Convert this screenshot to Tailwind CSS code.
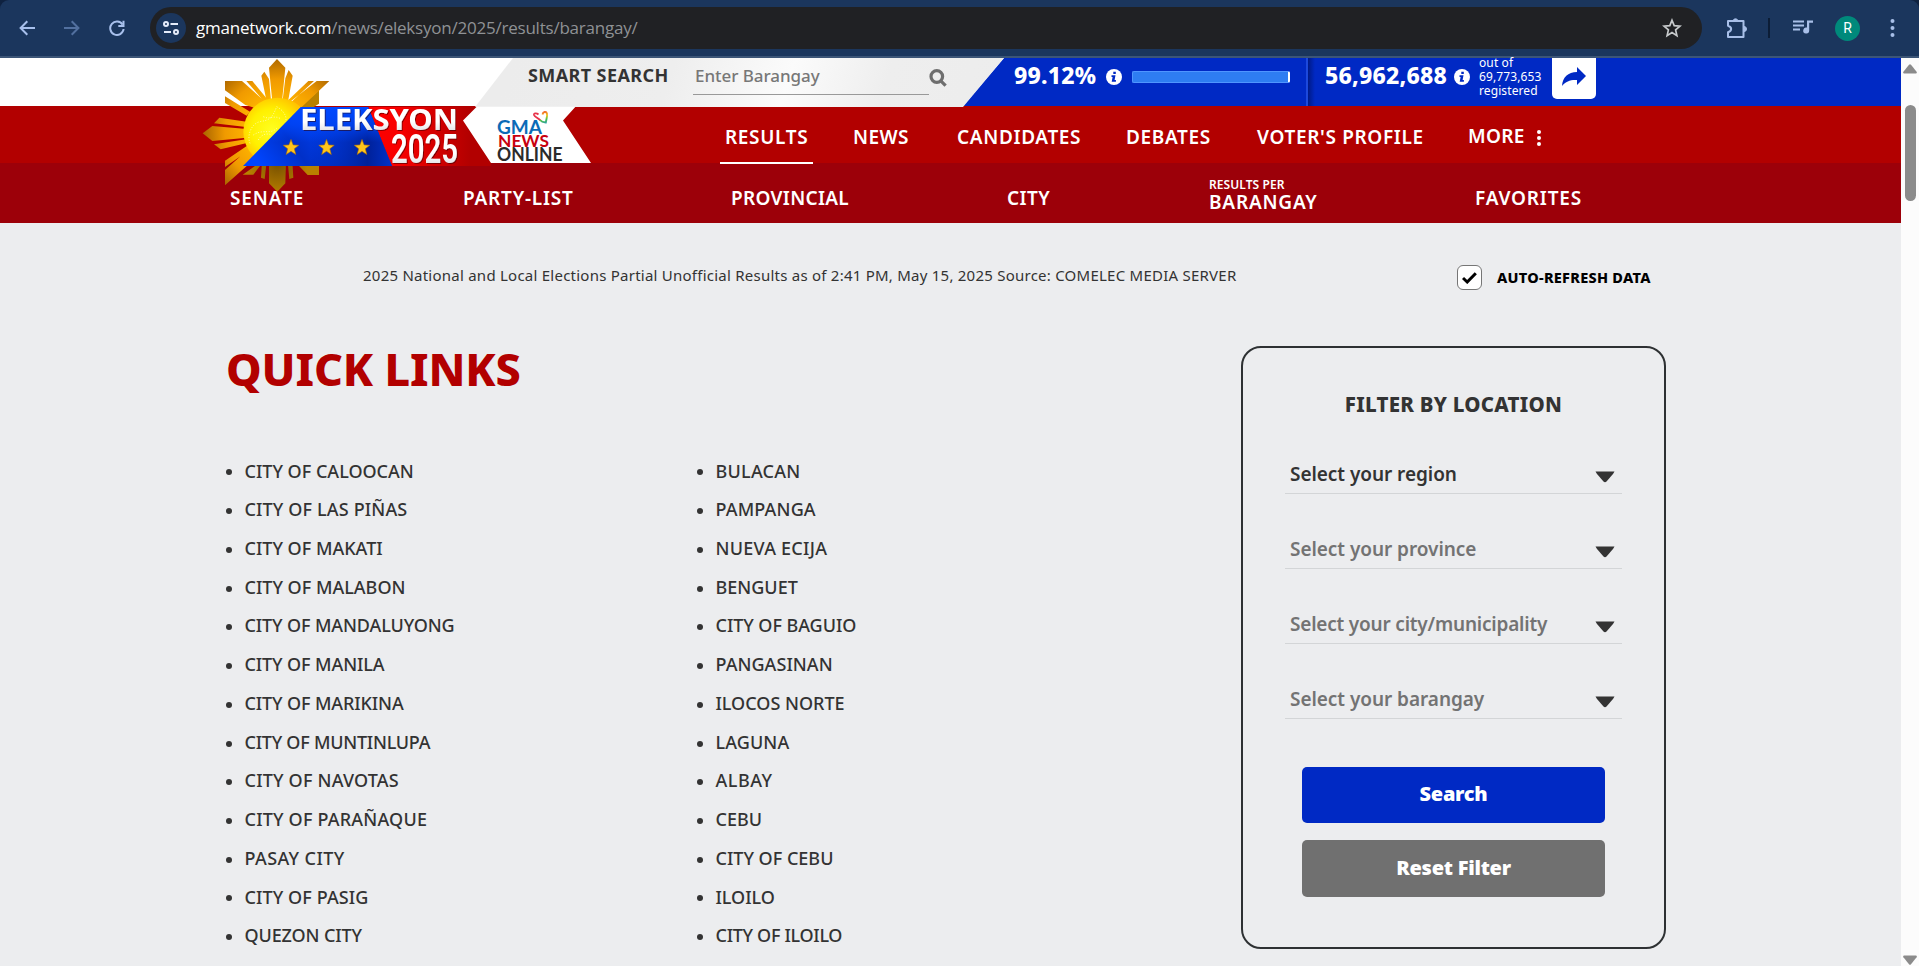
<!DOCTYPE html>
<html lang="en">
<head>
<meta charset="utf-8">
<title>Eleksyon 2025 - Barangay Results</title>
<script src="https://cdn.jsdelivr.net/npm/@tailwindcss/browser@4"></script>
</head>
<body class="flex h-[966px] w-[1919px] flex-col overflow-hidden bg-[#ecedef] font-['Noto_Sans',sans-serif] text-[#333]">

<!-- Browser toolbar -->
<header class="bg-[#0f2240]">
  <div class="flex h-[58px] items-start rounded-t-[9px] border-b-2 border-[#3c5577] bg-[#1b365d]">
    <div class="flex h-[56px] w-[150px] shrink-0 items-center gap-[29px] pl-[19px]">
      <svg class="h-[16px] w-[16px]" viewBox="0 0 16 16" fill="none" stroke="#a8c0ec" stroke-width="2"><path d="M16 8H2M8.3 1.3L1.6 8l6.7 6.7"/></svg>
      <svg class="h-[16px] w-[16px]" viewBox="0 0 16 16" fill="none" stroke="#52709f" stroke-width="2"><path d="M0 8h14M7.7 1.3L14.4 8l-6.7 6.7"/></svg>
      <svg class="h-[16px] w-[16px]" viewBox="0 0 16 16" fill="none" stroke="#a8c0ec" stroke-width="2"><path d="M13.6 4.6A6.7 6.7 0 1 0 14.6 9"/><path d="M14.5 .8V6H9.3"/></svg>
    </div>
    <div class="mt-[7px] flex h-[42px] w-[1552px] shrink-0 items-center rounded-full bg-[#202124]">
      <div class="ml-[6px] flex h-[30px] w-[30px] items-center justify-center rounded-full bg-[#1b365d]">
        <svg class="h-[16px] w-[16px]" viewBox="0 0 16 16" fill="none" stroke="#e4ebfa" stroke-width="2"><circle cx="3" cy="4" r="2"/><path d="M7.5 4H15M1 12h7"/><circle cx="13" cy="12" r="2"/></svg>
      </div>
      <div class="ml-[10px] whitespace-nowrap font-['Open_Sans',sans-serif] text-[17px] tracking-[-0.22px] text-[#8f9295]"><span class="text-white">gmanetwork.com</span>/news/eleksyon/2025/results/barangay/</div>
      <svg class="ml-auto mr-[20px] h-[20px] w-[20px]" viewBox="0 0 20 20" fill="none" stroke="#c7cacc" stroke-width="1.7"><path d="M10 2.2l2.2 5.4 5.8.5-4.4 3.8 1.3 5.7-4.9-3-4.9 3 1.3-5.7L2 8.100l5.800-.5z"/></svg>
    </div>
    <div class="flex h-[56px] items-center pl-[23px]">
      <svg class="h-[23px] w-[23px]" viewBox="0 0 23 23" fill="none" stroke="#a8bfe8" stroke-width="2"><path d="M3 4h15.500v16H3v-4.800c4.200-1.500 4.200-5 0-6.400z" stroke-linejoin="round"/><path d="M8 3.500a2.700 2.700 0 0 1 5 0zM19 9.500a2.500 2.500 0 0 1 0 5z" fill="#a8bfe8" stroke-width="1"/></svg>
      <div class="ml-[20px] h-[20px] w-[2px] bg-[#0c1d36]"></div>
      <svg class="ml-[23px] mb-[2px] h-[16px] w-[21px]" viewBox="0 0 21 16" fill="#a8bfe8"><path d="M0 1.500h11v2H0zM0 5.500h11v2H0zM0 9.500h7v2H0zM14 1.500h6v2.200h-3.800v7.800a3 3 0 1 1-2.200-2.900z"/></svg>
      <div class="ml-[21px] flex h-[25px] w-[25px] items-center justify-center rounded-full bg-[#00897b] font-['Roboto',sans-serif] text-[14px] text-white">R</div>
      <svg class="ml-[30px] h-[18px] w-[5px]" viewBox="0 0 5 18" fill="#a8bfe8"><circle cx="2.500" cy="2" r="2"/><circle cx="2.500" cy="9" r="2"/><circle cx="2.500" cy="16" r="2"/></svg>
    </div>
  </div>
</header>

<div class="flex h-[908px]">
<div class="relative w-[1901px]">

  <!-- Search and vote count -->
  <section class="relative flex h-[48px] bg-white">
    <svg class="absolute left-[475px] top-0 h-[49px] w-[1426px]" viewBox="0 0 1426 49">
      <defs>
        <linearGradient id="gg" x1="38" y1="0" x2="530" y2="160" gradientUnits="userSpaceOnUse"><stop offset="0" stop-color="#ececec"/><stop offset=".3" stop-color="#eeeeee"/><stop offset=".52" stop-color="#fbfbfb"/><stop offset=".7" stop-color="#eeeeee"/><stop offset="1" stop-color="#ececec"/></linearGradient>
        <linearGradient id="sh"><stop offset="0" stop-color="#001a86"/><stop offset="1" stop-color="#0029c4"/></linearGradient>
      </defs>
      <path d="M529 0H1426V48H488z" fill="#0029c4"/>
      <path d="M38 0H529L488 49H0z" fill="url(#gg)"/>
      <path d="M831 0h2v48h-2z" fill="#1d49dc"/><path d="M833 0h7v48h-7z" fill="url(#sh)"/>
    </svg>
    <div class="relative flex h-[36px] w-full items-center whitespace-nowrap">
      <div class="-mt-[2px] ml-[528px] w-[165px] text-[18px] font-bold tracking-[0.4px]">SMART SEARCH</div>
      <div class="mt-[5px] flex h-[33px] w-[236px] items-start border-b border-[#999] pl-[2px] pt-px text-[17px] font-medium leading-[25px] tracking-[-0.05px] text-[#777]">Enter Barangay</div>
      <svg class="mt-[3px] h-[18px] w-[18px]" viewBox="0 0 18 18" fill="none" stroke="#6e6e6e" stroke-width="3.200"><circle cx="7.800" cy="7.500" r="5.800"/><path d="M11.800 11.800l4.800 4.800"/></svg>
      <div class="-mt-[2px] ml-[67px] w-[92px] text-[23px] font-extrabold tracking-[0.2px] text-white">99.12%</div>
      <svg class="mt-px h-[16px] w-[16px]" viewBox="0 0 16 16"><circle cx="8" cy="8" r="8" fill="#fff"/><path d="M7.300 2.700h2.500v2.200H7.300zM5.500 6.300h4L8.600 11h1.300v1.700H5.700L6.600 8H5.500z" fill="#0029c4"/></svg>
      <div class="ml-[10px] mt-[2px] h-[12px] w-[158px] rounded-[2px] border border-r-2 border-[#4f95ff] border-r-white bg-[#2e7df2]"></div>
      <div class="-mt-[2px] ml-[35px] w-[129px] text-[23px] font-extrabold tracking-[0.2px] text-white">56,962,688</div>
      <svg class="mt-px h-[16px] w-[16px]" viewBox="0 0 16 16"><circle cx="8" cy="8" r="8" fill="#fff"/><path d="M7.300 2.700h2.500v2.200H7.300zM5.500 6.300h4L8.600 11h1.300v1.700H5.700L6.600 8H5.500z" fill="#0029c4"/></svg>
      <div class="ml-[9px] mt-[2px] w-[73px] text-[12px] leading-[14px] tracking-[0.1px] text-white">out of<br>69,773,653<br>registered</div>
      <div class="mt-[5px] flex h-[41px] w-[44px] items-center justify-center rounded-b-[5px] bg-white">
        <svg class="mt-[-3px] h-[20px] w-[26px]" viewBox="0 0 26 20" fill="#0029c4"><path d="M16 0l9 9-9 9v-5C10 12.500 5 14 1 19 1.500 10.500 7 5 16 5z"/></svg>
      </div>
    </div>
  </section>

  <!-- Primary navigation -->
  <nav class="grid h-[57px] grid-cols-[93px_40px_59px_45px_124px_45px_86px_45px_166px_45px_64px_20px] items-center bg-[#b20000] pl-[720px] pt-[5px] text-[19px] font-semibold tracking-[0.65px] text-white whitespace-nowrap">
    <div class="relative h-full pl-[5px] leading-[52px] after:absolute after:bottom-[-1px] after:left-0 after:z-10 after:h-[2px] after:w-[93px] after:bg-white">RESULTS</div>
    <div class="col-start-3 tracking-[0.4px]">NEWS</div>
    <div class="col-start-5">CANDIDATES</div>
    <div class="col-start-7">DEBATES</div>
    <div class="col-start-9">VOTER'S PROFILE</div>
    <div class="col-start-11 -mt-[2px] tracking-[0.3px]">MORE</div>
    <svg class="ml-[5px] mt-[2px] h-[16px] w-[4px]" viewBox="0 0 4 16" fill="#fff"><circle cx="2" cy="2" r="2"/><circle cx="2" cy="8" r="2"/><circle cx="2" cy="14" r="2"/></svg>
  </nav>

  <!-- Secondary navigation -->
  <nav class="grid h-[60px] grid-cols-[233px_268px_276px_202px_266px_110px] items-center bg-[#9c0009] pl-[230px] pt-[10px] text-[19px] font-semibold text-white whitespace-nowrap">
    <div class="relative z-10 tracking-[0.9px]">SENATE</div>
    <div class="tracking-[0.8px]">PARTY-LIST</div>
    <div class="tracking-[0.3px]">PROVINCIAL</div>
    <div class="tracking-[0.4px]">CITY</div>
    <div class="-mt-[9px]"><div class="text-[12px] leading-[16px] tracking-[0.08px]">RESULTS PER</div><div class="leading-[18px] tracking-[0.8px]">BARANGAY</div></div>
    <div class="tracking-[0.8px]">FAVORITES</div>
  </nav>

  <!-- Eleksyon 2025 and GMA News Online logos -->
  <svg class="absolute left-[200px] top-[-3px] h-[140px] w-[420px]" viewBox="200 55 420 140">
    <defs>
      <radialGradient id="ray" cx="232" cy="230" r="225" gradientUnits="userSpaceOnUse"><stop offset=".4" stop-color="#ffb400"/><stop offset=".7" stop-color="#f09a00"/><stop offset="1" stop-color="#a86400"/></radialGradient>
      <radialGradient id="rayd" cx="232" cy="330" r="90" gradientUnits="userSpaceOnUse"><stop offset="0" stop-color="#7a5200"/><stop offset="1" stop-color="#b98100"/></radialGradient>
      <radialGradient id="sun" cx="215" cy="225" r="105" gradientUnits="userSpaceOnUse"><stop offset="0" stop-color="#ffff20"/><stop offset=".6" stop-color="#fff000"/><stop offset="1" stop-color="#ffc400"/></radialGradient>
      <linearGradient id="bl" x1="260" y1="165" x2="330" y2="115" gradientUnits="userSpaceOnUse"><stop offset="0" stop-color="#0045ff"/><stop offset=".45" stop-color="#0030c8"/><stop offset="1" stop-color="#0045ff"/></linearGradient>
      <linearGradient id="bd" x1="310" y1="0" x2="392" y2="0" gradientUnits="userSpaceOnUse"><stop offset="0" stop-color="#001578" stop-opacity="0"/><stop offset=".7" stop-color="#001578" stop-opacity=".75"/><stop offset="1" stop-color="#001578" stop-opacity=".4"/></linearGradient>
      <linearGradient id="bt" x1="0" y1="107" x2="0" y2="166" gradientUnits="userSpaceOnUse"><stop offset="0" stop-color="#0048ff"/><stop offset=".3" stop-color="#0048ff" stop-opacity=".7"/><stop offset=".6" stop-color="#0048ff" stop-opacity="0"/></linearGradient>
      <linearGradient id="rd" x1="368" y1="0" x2="470" y2="0" gradientUnits="userSpaceOnUse"><stop offset="0" stop-color="#f00"/><stop offset=".3" stop-color="#f80000"/><stop offset="1" stop-color="#b20000"/></linearGradient>
      <linearGradient id="tx" x1="0" y1="0" x2="0" y2="1"><stop offset="0" stop-color="#fff"/><stop offset=".6" stop-color="#fff"/><stop offset="1" stop-color="#cfd0d6"/></linearGradient>
      <linearGradient id="ht" x1="543" y1="111" x2="547" y2="125" gradientUnits="userSpaceOnUse"><stop offset="0" stop-color="#f0502a"/><stop offset=".35" stop-color="#f5c51e"/><stop offset=".6" stop-color="#4cbf4a"/><stop offset="1" stop-color="#1a8fd6"/></linearGradient>
      <filter id="ds" x="-10%" y="-10%" width="125%" height="130%"><feDropShadow dx="1" dy="1" stdDeviation=".7" flood-color="#300" flood-opacity=".55"/></filter>
    </defs>
    <g transform="translate(200 55) scale(.33333)">
      <g fill="url(#rayd)">
        <path d="M207 320H258L256 385 232 410 207 385zM186 320h14l-6 52-11-4zM165 333h15l-20 26h-32zM263 320h14l3 48-12 4zM285 320h72v40h-34zM357 106v40l-22 14h-40z"/>
      </g>
      <g fill="url(#ray)">
        <path d="M231 12L256 38 246 140H217L207 38zM193 50L207 72 213 136 200 140 184 62zM266 45L278 62 264 140 248 135 256 70z"/>
        <path d="M75 78H126L197 142 170 160 136 150 75 106zM139 78H157L202 133 193 140zM75 124L150 170 140 182 75 144z"/>
        <path d="M8 235L37 213 140 222V248L37 258zM58 188L140 200 138 216 42 205zM42 268L138 253 144 263 62 283z"/>
        <path d="M75 345L165 265 200 280 75 391zM75 317L148 268 158 278 75 336z"/>
        <path d="M388 78H350L258 150 290 170zM325 78H342L268 146 258 142z"/>
      </g>
      <circle cx="232" cy="230" r="102" fill="url(#sun)"/>
      <g fill="none" stroke="#fff9a0" stroke-width="3" stroke-dasharray="3 5"><path d="M150 265c-10-25 5-60 30-65s35-5 50-45c20 10 35 35 25 45M160 240c30-20 50 0 70-20M190 185c20 10 30-5 50 5M175 255c10-20 30-20 40-15"/></g>
    </g>
    <path d="M368 107H476V120L491 163V166H392z" fill="url(#rd)"/>
    <path d="M243 166H392L368 107H301z" fill="url(#bl)"/>
    <path d="M243 166H392L368 107H301z" fill="url(#bd)"/>
    <path d="M243 166H392L368 107H301z" fill="url(#bt)"/>
    <g fill="#ffc61a" stroke="#b87400" stroke-width=".6">
      <path id="star" d="M291 139.500l2.100 5.400 5.600.4-4.400 3.500 1.500 5.700-4.800-3.200-4.800 3.200 1.500-5.700-4.400-3.500 5.600-.4z"/>
      <use href="#star" x="35.500"/><use href="#star" x="71"/>
    </g>
    <g filter="url(#ds)" fill="url(#tx)">
      <text x="300" y="129.500" font-family="Noto Sans" font-weight="700" font-size="29" textLength="158" lengthAdjust="spacingAndGlyphs">ELEKSYON</text>
      <text x="391" y="163" font-family="Roboto" font-weight="600" font-size="41.500" textLength="67" lengthAdjust="spacingAndGlyphs">2025</text>
    </g>
    <path d="M476.700 106.700H575.500L563 120.500 591 163H491L463 120.500z" fill="#fff"/>
    <g font-family="Lato" font-weight="700" font-size="18.500">
      <text x="497" y="133.500" fill="#0b6bb7" textLength="45" lengthAdjust="spacingAndGlyphs">GMA</text>
      <text x="498" y="147" font-size="17.500" fill="#c8000f" textLength="51" lengthAdjust="spacingAndGlyphs">NEWS</text>
      <text x="497" y="161" font-size="18" fill="#2b2b2b" textLength="65.500" lengthAdjust="spacingAndGlyphs">ONLINE</text>
    </g>
    <path d="M538.500 114.500c-2-1.800-5-1.300-4.500.5.700 2 4.500 3 6.500 5.500" fill="none" stroke="#e8334a" stroke-width="1.800"/>
    <path d="M542.500 114.500c.6-3 3.800-3.500 4.500-.8.500 2.800-.8 5.800-1.200 8.800-2-.2-4.300-.7-5.800-2.500" fill="none" stroke="url(#ht)" stroke-width="1.900"/>
  </svg>

  <!-- Status row -->
  <div class="flex h-[106px] items-center whitespace-nowrap pl-[363px]">
    <div class="-mt-[2px] w-[1094px] text-[15px] tracking-[0.24px]">2025 National and Local Elections Partial Unofficial Results as of 2:41 PM, May 15, 2025 Source: COMELEC MEDIA SERVER</div>
    <div class="mt-[3px] flex h-[25px] w-[25px] items-center justify-center rounded-[6px] border border-[#767676] bg-white">
      <svg class="h-[12px] w-[15px]" viewBox="0 0 15 12" fill="none" stroke="#000" stroke-width="3"><path d="M1 6l4.200 4L13.800 1.200"/></svg>
    </div>
    <div class="ml-[15px] mt-[4px] text-[14.500px] font-extrabold tracking-[0.27px] text-black">AUTO-REFRESH DATA</div>
  </div>

  <main class="flex items-start pl-[226px]">
    <section class="w-[1015px]">
      <h1 class="mt-[18px] h-[44px] whitespace-nowrap text-[45px] font-extrabold leading-[44px] tracking-[-0.15px] text-[#b20000]">QUICK LINKS</h1>
      <div class="mt-[60.500px] grid grid-cols-[471px_471px] whitespace-nowrap text-[18px] font-medium leading-[38.730px] [&_li]:flex [&_li]:items-center [&_li]:gap-[12.500px] [&_li]:before:mt-[3px] [&_li]:before:h-[6px] [&_li]:before:w-[6px] [&_li]:before:rounded-full [&_li]:before:bg-[#333]">
        <ul>
          <li>CITY OF CALOOCAN</li><li class="tracking-[0.15px]">CITY OF LAS PIÑAS</li><li>CITY OF MAKATI</li><li>CITY OF MALABON</li><li class="tracking-[-0.12px]">CITY OF MANDALUYONG</li><li class="tracking-[-0.1px]">CITY OF MANILA</li><li class="tracking-[-0.12px]">CITY OF MARIKINA</li><li class="tracking-[-0.25px]">CITY OF MUNTINLUPA</li><li class="tracking-[0.2px]">CITY OF NAVOTAS</li><li class="tracking-[0.2px]">CITY OF PARAÑAQUE</li><li class="tracking-[0.4px]">PASAY CITY</li><li class="tracking-[0.1px]">CITY OF PASIG</li><li class="tracking-[-0.12px]">QUEZON CITY</li>
        </ul>
        <ul>
          <li class="tracking-[0.25px]">BULACAN</li><li class="tracking-[0.15px]">PAMPANGA</li><li class="tracking-[0.25px]">NUEVA ECIJA</li><li>BENGUET</li><li class="tracking-[-0.05px]">CITY OF BAGUIO</li><li class="tracking-[0.05px]">PANGASINAN</li><li>ILOCOS NORTE</li><li class="tracking-[0.1px]">LAGUNA</li><li class="tracking-[0.5px]">ALBAY</li><li>CEBU</li><li>CITY OF CEBU</li><li>ILOILO</li><li class="tracking-[-0.3px]">CITY OF ILOILO</li>
        </ul>
      </div>
    </section>

    <aside class="mt-[17px] flex h-[603px] w-[425px] flex-col rounded-[20px] border-2 border-[#2e3133] pl-[42px] pr-[42px]">
      <h2 class="mt-[36px] text-center text-[20.500px] font-extrabold leading-[41px] tracking-[0.25px]">FILTER BY LOCATION</h2>
      <div class="mt-[28px] flex flex-col gap-[34px] text-[19px] font-semibold tracking-[-0.14px] text-[#737373] [&>div]:flex [&>div]:h-[41px] [&>div]:items-center [&>div]:justify-between [&>div]:border-b [&>div]:border-[#d3d5d7] [&>div]:pl-[5px] [&>div]:pr-[7px] [&>div]:pt-[2px]">
        <div class="tracking-[-0.05px] text-[#333]">Select your region<svg class="mt-[6px] h-[12px] w-[20px]" viewBox="0 0 20 12" fill="#333"><path d="M.5.500h19l-1.500 2.500-6.500 7.500q-1.500 1.300-3 0L2 3z"/></svg></div>
        <div class="tracking-[-0.05px]">Select your province<svg class="mt-[6px] h-[12px] w-[20px]" viewBox="0 0 20 12" fill="#333"><path d="M.5.500h19l-1.500 2.500-6.500 7.500q-1.500 1.300-3 0L2 3z"/></svg></div>
        <div class="tracking-[-0.2px]">Select your city/municipality<svg class="mt-[6px] h-[12px] w-[20px]" viewBox="0 0 20 12" fill="#333"><path d="M.5.500h19l-1.500 2.500-6.500 7.500q-1.500 1.300-3 0L2 3z"/></svg></div>
        <div class="tracking-[-0.05px]">Select your barangay<svg class="mt-[6px] h-[12px] w-[20px]" viewBox="0 0 20 12" fill="#333"><path d="M.5.500h19l-1.500 2.500-6.500 7.500q-1.500 1.300-3 0L2 3z"/></svg></div>
      </div>
      <div class="mx-[17px] mt-[48px] flex flex-col gap-[17px] text-[20px] font-black tracking-[-0.25px] text-white">
        <button class="h-[56px] rounded-[5px] bg-[#0029c4] pb-[2px]">Search</button>
        <button class="h-[57px] rounded-[5px] bg-[#707070] pb-[2px]">Reset Filter</button>
      </div>
    </aside>
  </main>
</div>

<!-- Scrollbar -->
<div class="flex w-[18px] flex-col items-center bg-[#fcfcfc]">
  <svg class="mt-[6px] h-[10px] w-[14px]" viewBox="0 0 14 10" fill="#8b8b8b"><path d="M6 .8q1-1 2 0l5.600 7q.8 1.700-1 1.700H1.400q-1.800 0-1-1.700z"/></svg>
  <div class="mt-[31px] h-[96px] w-[11px] rounded-full bg-[#8b8b8b]"></div>
  <svg class="mb-[1px] mt-auto h-[10px] w-[14px] rotate-180" viewBox="0 0 14 10" fill="#8b8b8b"><path d="M6 .8q1-1 2 0l5.600 7q.8 1.700-1 1.700H1.400q-1.800 0-1-1.700z"/></svg>
</div>
</div>
</body>
</html>
